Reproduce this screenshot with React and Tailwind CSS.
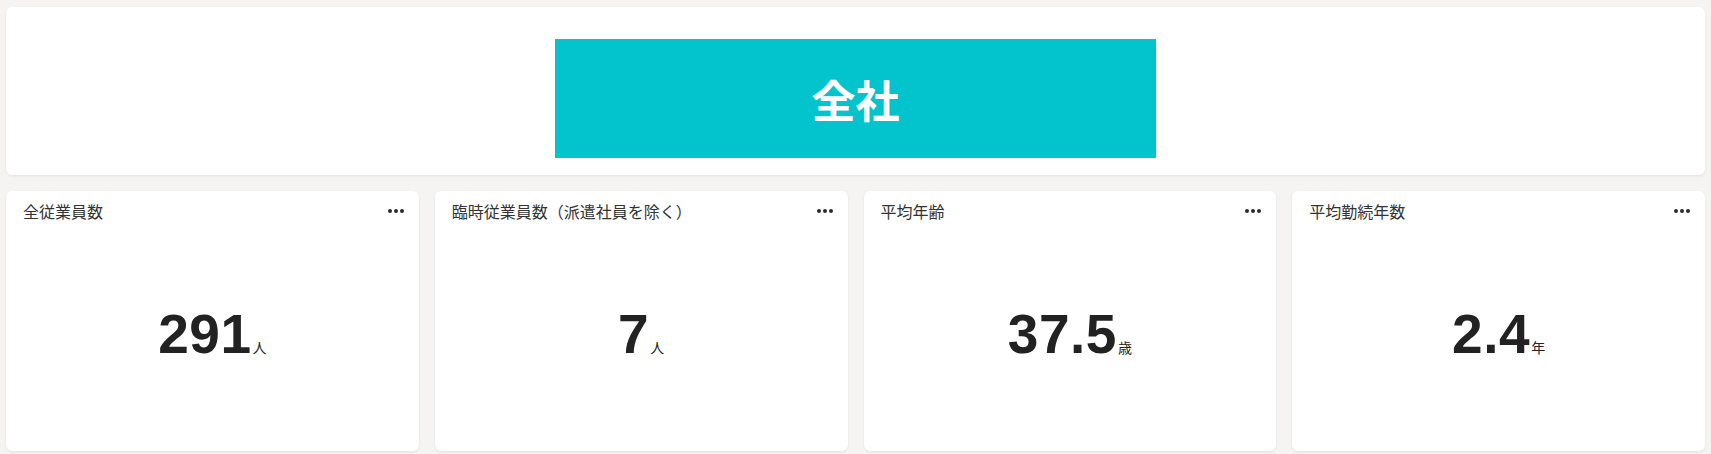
import React from 'react'

const stats = [
  { id: 'all', title: '全従業員数', value: '291', unit: '人' },
  { id: 'temp', title: '臨時従業員数（派遣社員を除く）', value: '7', unit: '人' },
  { id: 'age', title: '平均年齢', value: '37.5', unit: '歳' },
  { id: 'tenure', title: '平均勤続年数', value: '2.4', unit: '年' },
]

function Dots() {
  return (
    <svg width="16" height="4" viewBox="0 0 16 4" className="text-[#2b2b2b]">
      <circle cx="2" cy="2" r="2" fill="currentColor" />
      <circle cx="8" cy="2" r="2" fill="currentColor" />
      <circle cx="14" cy="2" r="2" fill="currentColor" />
    </svg>
  )
}

function StatCard({ title, value, unit }) {
  return (
    <div className="flex flex-col bg-white rounded-md shadow-[0_1px_3px_rgba(0,0,0,0.08)] min-w-0">
      <div className="flex items-center justify-between h-[39px] pl-[17px] pr-[15px] pt-[1px]">
        <span className="text-[16px] text-[#333] font-['Noto_Sans_CJK_JP',sans-serif] whitespace-nowrap">{title}</span>
        <Dots />
      </div>
      <div className="flex-1 flex items-center justify-center pb-[13px]">
        <div className="flex items-baseline text-[#222]">
          <span className="text-[55px] leading-none font-bold tracking-[0.01em] font-['Liberation_Sans',Arial,sans-serif]">{value}</span>
          <span className="ml-[1px] text-[14px] font-['Noto_Sans_CJK_JP',sans-serif]">{unit}</span>
        </div>
      </div>
    </div>
  )
}

export default function App() {
  return (
    <div className="w-full h-[454px] bg-[#f5f4f2] px-[6px] pt-[7px] flex flex-col gap-4 overflow-hidden">
      {/* Segment banner */}
      <div className="h-[168px] shrink-0 bg-white rounded-md shadow-[0_1px_3px_rgba(0,0,0,0.08)] flex justify-center pt-[32px]">
        <div className="w-[601px] h-[119px] bg-[#03c4cd] flex items-center justify-center">
          <span className="text-white text-[44px] font-bold font-['Noto_Sans_CJK_JP',sans-serif] leading-none">全社</span>
        </div>
      </div>

      {/* Stats */}
      <div className="grid grid-cols-4 gap-4 h-[260px] shrink-0">
        {stats.map(s => (
          <StatCard key={s.id} {...s} />
        ))}
      </div>
    </div>
  )
}
